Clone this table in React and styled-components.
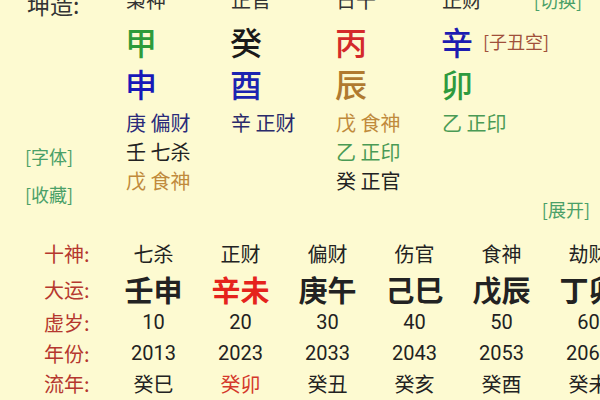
import React from "react";
import styled, { createGlobalStyle } from "styled-components";

const Global = createGlobalStyle`
  html, body { margin: 0; padding: 0; overflow: hidden; background: #fdfad1; }
  body { width: 600px; height: 400px; font-family: Roboto, "Noto Sans CJK SC", sans-serif; color: #222; }
`;

const Page = styled.div`
  width: 600px;
  height: 400px;
  overflow: hidden;
  background: #fdfad1;
`;

const Top = styled.section`
  display: flex;
  margin-top: -13px;
  height: 236px;
`;

const LeftCol = styled.div`
  width: 126px;
  display: flex;
  flex-direction: column;
`;

const Gender = styled.div`
  height: 26px;
  line-height: 26px;
  padding-left: 27px;
  font-size: 23px;
  color: #333;
  margin-top: 4px;
  font-family: "Noto Sans CJK SC", sans-serif;
`;

const Tools = styled.div`
  margin-top: 125px;
  padding-left: 25px;
  display: flex;
  flex-direction: column;
  gap: 9px;
`;

const Link = styled.span`
  display: block;
  font-size: 18px;
  line-height: 29px;
  color: ${(p) => p.$color || "#4aa068"};
  font-family: "Noto Sans CJK SC", sans-serif;
`;

const Pillar = styled.div`
  width: ${(p) => p.$w || "105px"};
  flex: ${(p) => (p.$grow ? "1" : "none")};
  min-width: 0;
  display: flex;
  flex-direction: column;
  padding-right: ${(p) => (p.$grow ? "10px" : "0")};
`;

const HeaderCell = styled.div`
  height: 26px;
  line-height: 26px;
  font-size: 20px;
  color: #333;
  display: flex;
  justify-content: space-between;
  align-items: center;
  font-family: "Noto Sans CJK SC", sans-serif;
`;

const StemCell = styled.div`
  height: 54px;
  display: flex;
  align-items: center;
  gap: 10px;
  padding-top: 2px;
  box-sizing: border-box;
`;

const BranchCell = styled.div`
  height: 32px;
  display: flex;
  align-items: center;
`;

const Big = styled.span`
  font-size: 32px;
  font-weight: 500;
  color: ${(p) => p.$color};
  font-family: "Noto Sans CJK SC", sans-serif;
  line-height: 1;
  margin-left: -1px;
`;

const HiddenList = styled.div`
  margin-top: 9px;
  height: 87px;
  display: flex;
  flex-direction: column;
`;

const HiddenItem = styled.div`
  height: 29px;
  line-height: 29px;
  font-size: 20px;
  color: ${(p) => p.$color};
  font-family: "Noto Sans CJK SC", sans-serif;
`;

const Tag = styled.span`
  font-size: 18px;
  color: ${(p) => p.$color || "#4aa068"};
  font-family: "Noto Sans CJK SC", sans-serif;
  padding-right: ${(p) => p.$pr || "0"};
  white-space: nowrap;
`;

const ExpandRow = styled.div`
  height: 28px;
  line-height: 28px;
  display: flex;
  justify-content: flex-end;
`;

const Bottom = styled.section`
  padding-top: 15px;
  display: flex;
  flex-direction: column;
`;

const Row = styled.div`
  display: grid;
  grid-template-columns: 110px repeat(6, 87px);
  height: ${(p) => p.$h}px;
  align-items: center;
`;

const Label = styled.div`
  padding-left: 44px;
  font-size: 20px;
  color: #b5372e;
  font-family: "Noto Sans CJK SC", sans-serif;
`;

const Cell = styled.div`
  text-align: center;
  font-size: ${(p) => (p.$big ? "29px" : "20px")};
  font-weight: ${(p) => (p.$big ? 700 : 400)};
  color: ${(p) => p.$color || "#222"};
  font-family: ${(p) => (p.$num ? "Roboto, sans-serif" : '"Noto Sans CJK SC", sans-serif')};
  white-space: nowrap;
`;

const pillars = [
  {
    head: "枭神",
    stem: ["甲", "#2e9b3a"],
    branch: ["申", "#1818b8"],
    hidden: [["庚 偏财", "#2a2a7a"], ["壬 七杀", "#222"], ["戊 食神", "#c08a3c"]],
    w: "105px",
  },
  {
    head: "正官",
    stem: ["癸", "#1a1a1a"],
    branch: ["酉", "#1c24b0"],
    hidden: [["辛 正财", "#2a2a6a"]],
    w: "105px",
  },
  {
    head: "日干",
    stem: ["丙", "#d42a2a"],
    branch: ["辰", "#b07a30"],
    hidden: [["戊 食神", "#c08a3c"], ["乙 正印", "#4a9a55"], ["癸 正官", "#222"]],
    w: "106px",
  },
];

const rows = [
  { label: "十神:", h: 30, items: ["七杀", "正财", "偏财", "伤官", "食神", "劫财"] },
  { label: "大运:", h: 38, big: true, items: ["壬申", "辛未", "庚午", "己巳", "戊辰", "丁卯"], colors: { 1: "#e5231c" } },
  { label: "虚岁:", h: 32, num: true, items: ["10", "20", "30", "40", "50", "60"] },
  { label: "年份:", h: 30, num: true, items: ["2013", "2023", "2033", "2043", "2053", "2063"] },
  { label: "流年:", h: 30, items: ["癸巳", "癸卯", "癸丑", "癸亥", "癸酉", "癸未"], colors: { 1: "#d4382a" } },
];

export default function App() {
  return (
    <Page>
      <Global />
      <Top>
        <LeftCol>
          <Gender>坤造:</Gender>
          <Tools>
            <Link>[字体]</Link>
            <Link>[收藏]</Link>
          </Tools>
        </LeftCol>
        {pillars.map((p) => (
          <Pillar key={p.head} $w={p.w}>
            <HeaderCell>{p.head}</HeaderCell>
            <StemCell>
              <Big $color={p.stem[1]}>{p.stem[0]}</Big>
            </StemCell>
            <BranchCell>
              <Big $color={p.branch[1]}>{p.branch[0]}</Big>
            </BranchCell>
            <HiddenList>
              {p.hidden.map(([t, c]) => (
                <HiddenItem key={t} $color={c}>{t}</HiddenItem>
              ))}
            </HiddenList>
          </Pillar>
        ))}
        <Pillar $grow>
          <HeaderCell>
            <span>正财</span>
            <Tag $pr="8px">[切换]</Tag>
          </HeaderCell>
          <StemCell>
            <Big $color="#1c1cb0">辛</Big>
            <Tag $color="#a0503a">[子丑空]</Tag>
          </StemCell>
          <BranchCell>
            <Big $color="#2e9a3e">卯</Big>
          </BranchCell>
          <HiddenList>
            <HiddenItem $color="#4a9a55">乙 正印</HiddenItem>
          </HiddenList>
          <ExpandRow>
            <Tag>[展开]</Tag>
          </ExpandRow>
        </Pillar>
      </Top>
      <Bottom>
        {rows.map((r) => (
          <Row key={r.label} $h={r.h}>
            <Label>{r.label}</Label>
            {r.items.map((it, i) => (
              <Cell key={i} $big={r.big} $num={r.num} $color={r.colors && r.colors[i]}>
                {it}
              </Cell>
            ))}
          </Row>
        ))}
      </Bottom>
    </Page>
  );
}
